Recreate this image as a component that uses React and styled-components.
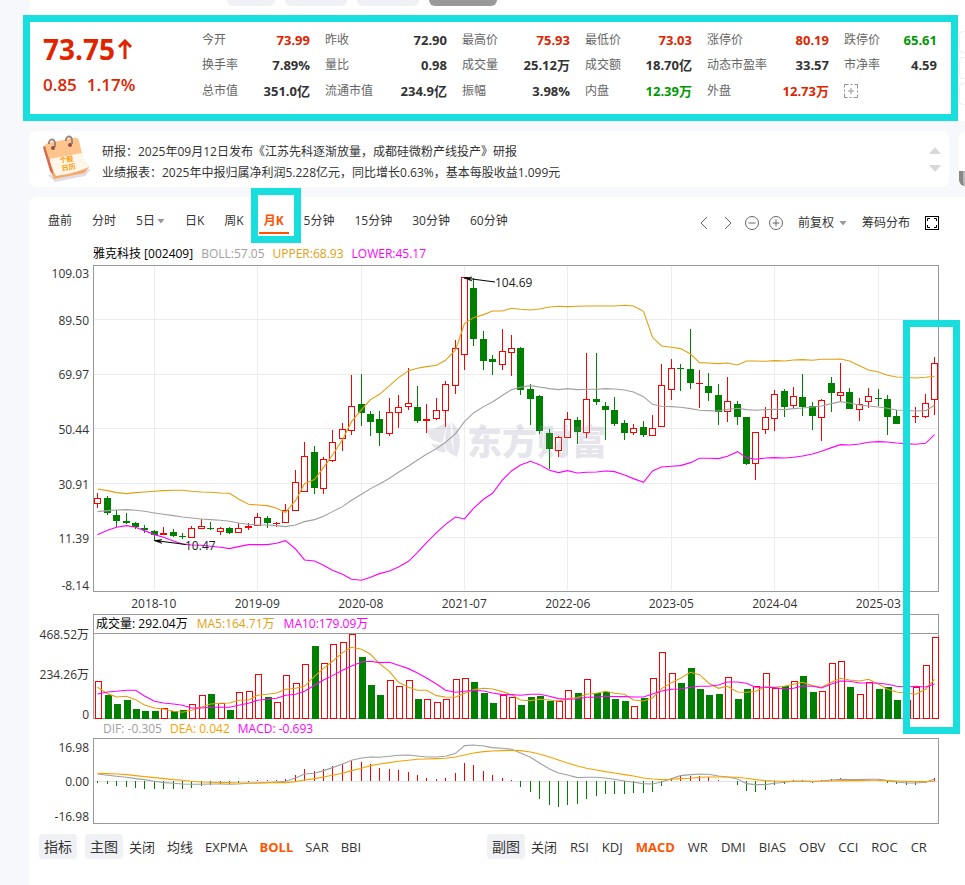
import React, { useState } from 'react'
import styled, { createGlobalStyle } from 'styled-components'

const GlobalStyle = createGlobalStyle`
    * {
        box-sizing: border-box;
    }

    body {
        margin: 0;
        background-color: #f6f8fb;
        color: #333;
        font: 12px/16px "Open Sans", "Noto Sans CJK SC", sans-serif;
    }

    button, select {
        padding: 0;
        border: 0;
        background: none;
        color: inherit;
        font: inherit;
        white-space: nowrap;
        cursor: pointer;
    }
`;

const RED = '#ff0000';
const GREEN = '#008000';
const GOLD = '#e0a010';
const ORANGE = '#f5a300';
const PINK = '#ff00ff';
const GREY = '#a0a0a0';
const MARK = '#18dede';

const Page = styled.div`
    min-height: 100vh;
    padding-left: 29px;

    display: flex;
    flex-direction: column;
`;

/* ---------- quote ---------- */

const Top = styled.header`
    background-color: #fff;
`;

const Pills = styled.div`
    height: 15px;
    padding-left: 198px;

    display: flex;
    gap: 10px;
`;

const Pill = styled.span`
    width: ${p => p.$width}px;
    height: 6px;

    border-radius: 0 0 6px 6px;
    background-color: ${p => p.$on ? '#999' : '#f0f1f4'};
`;

const TopRow = styled.div`
    display: flex;
    gap: 1px;
`;

const QuoteBox = styled.section`
    flex: 1;
    margin-left: -6px;
    padding: 5px 14px 9px 13px;

    display: flex;

    border: 7px solid ${MARK};
    background-color: #fff;
`;

const SideSlots = styled.div`
    width: 6px;
    padding-top: 16px;

    display: flex;
    flex-direction: column;
    gap: 4px;
`;

const Slot = styled.span`
    height: 22px;

    border: 1px solid #eceef2;
    border-right: 0;
    border-radius: 4px 0 0 4px;
`;

const PriceBlock = styled.div`
    width: 159px;
    flex: none;

    color: #e02400;
    font-weight: 600;
`;

const Price = styled.div`
    padding-top: 4px;

    display: flex;
    align-items: center;
    gap: 3px;

    font-size: 28px;
    line-height: 36px;
    font-weight: 700;
`;

const Change = styled.div`
    display: flex;
    gap: 10px;

    font-size: 17px;
    line-height: 36px;
`;

const Stats = styled.dl`
    flex: 1;
    margin: 0;

    display: grid;
    grid-template-columns: 108fr 122fr 108fr 107fr 122fr 93fr;
    grid-template-rows: 25px 25px 28px;
    column-gap: 15px;
`;

const Stat = styled.div`
    display: flex;
    align-items: center;
    justify-content: space-between;

    white-space: nowrap;

    dt {
        color: #666;
    }

    dd {
        margin: 0;

        color: ${p => p.$color || '#333'};
        font-size: 13px;
        font-weight: 700;
    }
`;

/* ---------- news ---------- */

const NewsRow = styled.div`
    margin: 10px 0;

    display: flex;
    gap: 10px;
`;

const News = styled.section`
    flex: 1;
    height: 56px;
    padding: 0 8px 0 13px;

    display: flex;
    align-items: center;

    border-radius: 8px;
    background-color: #fff;
`;

const NewsList = styled.ul`
    flex: 1;
    margin: 5px 0 0 10px;
    padding: 0;

    list-style: none;
    line-height: 21px;

    a {
        color: #333;
        text-decoration: none;
    }
`;

const Pager = styled.div`
    padding-top: 1px;

    display: flex;
    flex-direction: column;
    gap: 11px;
`;

const Triangle = styled.button`
    width: 12px;
    height: 7px;

    background-color: #d8d8d8;
    clip-path: polygon(${p => p.$up ? '50% 0, 100% 100%, 0 100%' : '0 0, 100% 0, 50% 100%'});
`;

const SideCard = styled.aside`
    width: 6px;
    padding-top: 40px;

    border-radius: 8px 0 0 8px;
    background-color: #fff;
`;

const SideBadge = styled.div`
    height: 15px;

    border-radius: 0 0 0 8px;
    border-left: 4px solid #888;
    background-color: #bbb;
`;

/* ---------- chart card ---------- */

const Card = styled.main`
    flex: 1;
    padding: 16px 26px 0 0;

    border-radius: 8px 0 0 0;
    background-color: #fff;
`;

const Toolbar = styled.div`
    padding-left: 19px;

    display: flex;
    align-items: flex-start;
    justify-content: space-between;
`;

const Tabs = styled.nav`
    display: flex;
    gap: 20px;
`;

const Tab = styled.button`
    position: relative;

    display: flex;
    align-items: center;
    gap: 2px;

    color: ${p => p.$on ? '#ff5500' : '#333'};
    font-weight: ${p => p.$on ? 700 : 400};

    &::after {
        content: "";
        display: ${p => p.$on ? 'block' : 'none'};
        position: absolute;
        left: -5px;
        right: -5px;
        bottom: -5px;
        height: 2px;
        background-color: #ff5500;
    }
`;

const TabMark = styled.span`
    position: absolute;
    inset: -25px -17px -14px -13px;
    z-index: 2;

    border: 7px solid ${MARK};
    pointer-events: none;
`;

const Caret = styled.span`
    width: 8px;
    height: 5px;

    background-color: #999;
    clip-path: polygon(0 0, 100% 0, 50% 100%);
`;

const Tools = styled.div`
    padding-top: 2px;

    display: flex;
    align-items: center;
    gap: 15px;
`;

const IconButton = styled.button`
    display: flex;

    svg {
        fill: none;
        stroke: ${p => p.$dark ? '#000' : '#666'};
    }
`;

const Adjust = styled.label`
    display: flex;
    align-items: center;
    gap: 4px;

    select {
        width: 37px;
        appearance: none;
    }
`;

const Steppers = styled.div`
    display: flex;
    gap: 10px;
`;

const Charts = styled.div`
    position: relative;
    padding-top: 11px;
`;

const Legend = styled.div`
    margin-left: 64px;
    padding-left: ${p => p.$indent || 0}px;
    height: ${p => p.$height}px;

    display: flex;
    align-items: center;
    gap: 8px;

    color: #000;
    white-space: nowrap;
`;

const LegendItem = styled.span`
    color: ${p => p.$color};
`;

const ChartRow = styled.div`
    display: grid;
    grid-template-columns: 64px 1fr;
`;

const Axis = styled.div`
    margin-bottom: -${p => p.$drop || 0}px;
    padding: ${p => p.$top}px 4px 0 0;

    display: grid;
    grid-template-rows: ${p => p.$rows};
    align-items: center;

    text-align: right;

    span:first-child {
        align-self: start;
    }

    span:last-child {
        align-self: end;
    }
`;

const Panel = styled.div`
    align-self: start;

    border: 1px solid #999;

    svg {
        display: block;
        width: 100%;
        overflow: visible;
    }
`;

const VolumeTitle = styled.div`
    height: 19px;
    padding-left: 2px;

    display: flex;
    align-items: center;
    gap: 9px;

    border-bottom: 1px solid #999;
    color: #000;
    white-space: nowrap;
`;

const Dates = styled.div`
    height: 22px;
    margin-left: 64px;
    padding: 2px 9px 0;

    display: grid;
    grid-template-columns: repeat(8, 1fr);
    align-items: center;

    text-align: center;
`;

const LatestMark = styled.div`
    position: absolute;
    top: 89px;
    right: -21px;
    z-index: 2;

    width: 57px;
    height: 414px;

    border: 7px solid ${MARK};
    pointer-events: none;
`;

/* ---------- indicators ---------- */

const Indicators = styled.footer`
    padding: 10px 4px 24px 10px;

    display: grid;
    grid-template-columns: 1fr 1fr;
`;

const Group = styled.div`
    display: flex;
    align-items: center;
    gap: 6px;
`;

const Badges = styled.div`
    display: flex;
    gap: 8px;
`;

const Badge = styled.span`
    padding: 0 5px;

    border-radius: 4px;
    background-color: #f0f1f4;
    font-size: 14px;
    line-height: 25px;
    white-space: nowrap;
`;

const Names = styled.div`
    display: flex;
    gap: ${p => p.$gap}px;
`;

const Indicator = styled.button`
    color: ${p => p.$on ? '#ff5500' : '#333'};
    font-size: 13px;
    font-weight: ${p => p.$on ? 700 : 400};
`;

/* ---------- data ---------- */

const stats = [
    ['今开', '73.99', '#e02400'],
    ['昨收', '72.90'],
    ['最高价', '75.93', '#e02400'],
    ['最低价', '73.03', '#e02400'],
    ['涨停价', '80.19', '#e02400'],
    ['跌停价', '65.61', '#009900'],
    ['换手率', '7.89%'],
    ['量比', '0.98'],
    ['成交量', '25.12万'],
    ['成交额', '18.70亿'],
    ['动态市盈率', '33.57'],
    ['市净率', '4.59'],
    ['总市值', '351.0亿'],
    ['流通市值', '234.9亿'],
    ['振幅', '3.98%'],
    ['内盘', '12.39万', '#009900'],
    ['外盘', '12.73万', '#e02400'],
];

const periods = ['盘前', '分时', '5日', '日K', '周K', '月K', '5分钟', '15分钟', '30分钟', '60分钟'];
const mainIndicators = ['关闭', '均线', 'EXPMA', 'BOLL', 'SAR', 'BBI'];
const subIndicators = ['关闭', 'RSI', 'KDJ', 'MACD', 'WR', 'DMI', 'BIAS', 'OBV', 'CCI', 'ROC', 'CR'];
const dates = ['2018-10', '2019-09', '2020-08', '2021-07', '2022-06', '2023-05', '2024-04', '2025-03'];

// one candle per month: high, body top, body bottom, low (thirds of a pixel, downwards)
const candles = [
    [692,708,725,738],[703,708,752,758],[743,759,777,795],[753,777,783,785],[779,783,795,800],
    [790,798,804,812],[804,807,819,833],[794,813,819,819],[801,810,822,825],[813,822,825,831],
    [792,798,828,828],[771,792,801,801],[779,798,801,804],[795,798,810,818],[796,798,813,816],
    [783,798,813,813],[783,792,798,804],[752,765,792,792],[761,768,783,797],[779,783,786,794],
    [727,744,783,783],[624,660,747,747],[540,582,690,690],[552,570,678,696],[585,591,681,697],
    [504,540,597,600],[483,501,531,566],[339,432,507,518],[337,426,453,492],[448,456,480,522],
    [447,471,513,551],[408,450,516,522],[399,435,453,498],[318,423,435,444],[372,435,477,482],
    [426,471,476,514],[409,444,471,474],[357,366,447,496],[234,258,372,395],[45,45,279,324],
    [48,78,231,251],[207,231,297,323],[280,291,300,339],[201,267,309,323],[220,258,273,342],
    [255,258,384,399],[365,381,411,489],[400,402,507,515],[501,513,561,622],[522,525,567,585],
    [450,471,528,528],[465,474,510,546],[273,411,513,528],[273,411,420,428],[420,432,444,533],
    [405,444,486,493],[473,483,513,533],[486,498,513,518],[477,495,519,524],[459,498,522,523],
    [305,369,495,495],[291,318,384,413],[306,318,321,388],[202,321,363,381],[324,363,366,438],
    [333,372,393,418],[367,399,450,490],[345,417,450,480],[418,426,465,489],[465,465,606,609],
    [510,510,606,654],[435,465,504,516],[384,396,471,508],[382,387,435,465],[375,402,432,438],
    [336,405,435,462],[420,432,462,504],[411,414,468,537],[345,363,393,450],[303,390,402,418],
    [378,390,441,441],[408,426,444,476],[378,402,420,438],[381,408,411,432],[399,411,465,519],
    [443,462,486,486],[440,462,471,480],[435,462,465,483],[396,423,465,467],[285,303,414,459],
];
const candleColors = 'RGGGGGGRGGRRGRGRRRGRRRRGRRRRGGGRRRGRRRRRGGGRRGGGGRRGRGGGGRGRRRGGRGGRGGRRRGRGGRGRGRRGGGRRRR';

const upper = [680,685,691,694,691,689,687,685,684,684,687,689,690,692,693,710,726,728,730,738,750,715,664,652,616,578,532,478,442,412,396,370,346,325,318,313,309,294,263,184,166,157,146,146,138,141,143,140,134,132,133,132,131,131,131,131,129,131,147,225,251,255,259,275,301,302,304,302,308,296,296,297,295,296,293,292,294,291,291,290,296,310,323,329,339,344,345,347,345,342];
const boll = [748,745,743,742,744,747,752,756,760,764,767,770,772,774,777,782,786,788,788,790,793,788,778,772,762,748,733,714,696,679,665,648,630,611,593,576,559,540,514,478,452,433,419,399,382,375,370,374,379,382,379,382,381,381,379,380,383,389,403,426,432,433,435,439,444,445,446,441,438,442,444,442,441,442,439,437,434,431,424,418,422,428,431,434,438,443,444,446,445,429];
const lower = [817,804,795,790,795,805,817,825,836,845,848,849,852,855,859,853,847,847,847,843,835,860,893,896,909,924,936,951,954,945,934,926,914,897,870,841,811,786,764,770,738,711,693,653,626,608,597,607,624,631,625,632,630,629,626,628,638,649,660,626,614,612,610,601,588,588,589,582,568,586,591,587,586,587,585,581,575,567,556,547,548,545,540,538,539,542,544,546,543,517];

const volumes = [274,315,342,330,357,363,363,354,363,360,342,315,312,340,360,306,303,252,321,336,255,279,222,168,219,162,156,132,201,285,315,270,288,270,327,327,336,327,267,264,276,309,339,315,321,345,321,318,333,333,300,309,267,309,306,327,333,348,324,264,186,249,279,234,297,315,312,261,327,297,288,249,294,288,273,258,306,303,219,213,291,312,276,297,291,330,330,291,225,141];
const volumeColors = 'RGGGGGGRGGRRGRGRRRGRRRRGRRRRGGGRRRGRRRRRGGGRRGGGGRRGRGGGGRGRRRGGGGGRGGRRRGRGGRRRGRRGGGRRRR';
const ma5 = [291,310,320,318,328,344,353,356,363,366,360,350,341,339,338,330,329,315,312,308,297,294,288,258,234,213,187,171,177,192,220,244,276,291,300,300,316,320,321,309,298,294,296,304,313,329,331,327,329,332,325,322,312,309,303,309,312,329,332,323,295,277,264,246,253,278,294,288,305,306,303,290,291,288,282,276,286,291,276,264,269,272,267,281,297,305,308,312,297,267];
const ma10 = [311,305,303,300,300,317,333,338,341,345,353,353,351,351,351,345,339,330,327,324,315,312,303,285,269,256,240,227,215,213,217,216,225,235,248,263,281,300,306,303,300,302,308,313,313,315,312,312,318,325,327,326,321,321,318,319,319,320,320,311,302,297,296,291,288,288,284,275,275,279,291,291,292,296,294,287,288,293,281,272,273,278,278,279,282,288,290,288,290,281];

const macd = [578,581,587,591,594,597,598,598,598,597,593,588,585,582,583,579,577,571,570,570,567,555,538,542,536,528,522,513,515,523,534,538,541,545,556,564,568,564,549,519,526,542,556,564,570,591,606,627,645,651,645,642,628,617,612,612,613,610,610,606,587,567,558,557,558,562,571,572,585,603,606,599,585,581,571,571,578,571,568,565,570,570,569,570,578,583,585,585,580,563];
const dif = [551,555,558,561,565,568,573,577,579,581,582,582,581,581,582,581,579,578,577,575,573,563,551,549,541,532,521,510,503,500,501,498,495,494,497,500,500,498,489,466,464,467,472,474,477,488,501,518,536,548,554,562,561,561,563,567,572,576,580,581,575,565,556,553,551,552,557,560,566,580,583,583,579,576,573,572,574,572,569,567,568,568,567,567,571,575,578,578,576,566];
const dea = [549,550,551,553,556,559,562,565,568,570,573,575,576,577,577,578,578,578,577,577,577,574,569,565,560,555,549,541,534,526,521,517,513,510,507,506,505,504,500,494,488,484,482,481,480,481,485,491,500,509,518,527,534,539,544,548,553,557,563,566,568,567,565,564,561,560,560,560,561,564,568,571,572,573,573,573,573,573,572,571,571,571,570,570,571,572,573,574,574,573];

const left = i => Math.round(0.4 + 9.4 * i);
const scaleFrom = top => v => Math.round((v - top) / 3);

/* ---------- drawings ---------- */

const Line = ({values, top, color}) => (
    <polyline
        points={values.map((v, i) => `${left(i) + 3.5},${(v - top) / 3 + 0.3}`).join(' ')}
        fill="none"
        stroke={color}
        strokeWidth="1.1"
    />
);

const Body = ({x, y, height, red}) => red && height > 2
    ? <rect x={x + 0.5} y={y + 0.5} width="6" height={height - 1} fill="#fff" stroke={RED}/>
    : <rect x={x} y={y} width="7" height={height} fill={red ? RED : GREEN}/>;

const PriceChart = () => {
    const y = scaleFrom(12);

    return (
        <svg viewBox="0 0 844 325" role="img" aria-label="雅克科技月K线">
            <g fill="#ececec">
                {[54, 109, 163, 218, 272].map(v => <rect key={v} y={v - 1} width="844" height="1"/>)}
                {[6, 17, 28, 39, 50, 61, 72, 83].map(i => <rect key={i} x={left(i) + 3} width="1" height="324"/>)}
            </g>
            {candles.map(([high, open, close, low], i) => {
                const red = candleColors[i] === 'R';
                return (
                    <g key={i}>
                        <rect x={left(i) + 3} y={y(high)} width="1" height={y(low) - y(high)} fill={red ? RED : GREEN}/>
                        <Body x={left(i)} y={y(open)} height={y(close) - y(open)} red={red}/>
                    </g>
                );
            })}
            <Line values={boll} top={12} color={GREY}/>
            <Line values={upper} top={12} color={GOLD}/>
            <Line values={lower} top={12} color={PINK}/>
            <g stroke="#000" fill="#000">
                <path d="M370.500 12 L401 16"/>
                <path d="M370 12 l8 -1 l-3 1.500 l3 2.500 z" strokeWidth="0.500"/>
                <path d="M60.500 274.500 L92 278.500"/>
                <path d="M60 274.500 l8 -1 l-3 1.500 l3 2.500 z" strokeWidth="0.500"/>
            </g>
            <g fontSize="12" fill="#222">
                <text x="401" y="21">104.69</text>
                <text x="91" y="284">10.47</text>
            </g>
            <g fill="#8c8ca8" opacity="0.22">
                <path d="M332 162 C339 167 345 158 354 157 C352 163 350 168 349 176 C342 178 334 172 332 162 Z"/>
                <path d="M337 177 C343 180 347 178 350 177 L352 186 C346 187 340 184 337 177 Z"/>
                <path d="M351 176 C351 167 353 160 356 156 C358 168 356 178 362 190 C355 188 351 184 351 176 Z"/>
                <path d="M358 156 C366 163 369 178 362 192 C358 180 359 168 358 156 Z"/>
                <text x="373" y="189" fontSize="35" fontWeight="900" fontFamily="'Noto Sans CJK SC', sans-serif">东方财富</text>
            </g>
        </svg>
    );
};

const VolumeChart = () => {
    const y = scaleFrom(132);

    return (
        <svg viewBox="0 0 844 84" role="img" aria-label="成交量">
            {volumes.map((v, i) => (
                <Body key={i} x={left(i) + 1} y={y(v)} height={85 - y(v)} red={volumeColors[i] === 'R'}/>
            ))}
            <Line values={ma5} top={132} color={GOLD}/>
            <Line values={ma10} top={132} color={PINK}/>
        </svg>
    );
};

const MacdChart = () => {
    const y = scaleFrom(447);

    return (
        <svg viewBox="0 0 844 84" role="img" aria-label="MACD">
            <rect y="42" width="844" height="1" fill="#e4e4e4"/>
            {macd.map((v, i) => (
                <rect
                    key={i}
                    x={left(i) + 3}
                    y={v < 574 ? y(v) : 42}
                    width="1"
                    height={Math.abs(y(v) - 42)}
                    fill={v < 574 ? RED : GREEN}
                />
            ))}
            <Line values={dif} top={447} color={GREY}/>
            <Line values={dea} top={447} color={ORANGE}/>
        </svg>
    );
};

const CalendarIcon = () => (
    <svg width="50" height="48" viewBox="0 0 50 48" aria-hidden="true">
        <path d="M6 40 L38 35 L49 34 L43 41 L13 47 Z" fill="#dcd3dc" opacity="0.8"/>
        <path d="M2 16 L12 44 L42 38 L47 32 L38 20 Z" fill="#f6a868"/>
        <path d="M1 12 L4 10 L10 24 L11 40 L8 36 Z" fill="#d9694a"/>
        <path d="M7 22 L39 15 Q42 26 48 31 Q39 37 14 41 Q9 33 7 22 Z" fill="#fff6ea"/>
        <path d="M3 11 Q3 9 6 8 L32 3 Q36 2 37 6 L40 18 L7 24 Z" fill="#ffc48c"/>
        <path d="M7 9 a3 4 0 0 1 6 -1 l0 4 M24 6 a3 4 0 0 1 6 -1 l0 4" fill="none" stroke="#a58378" strokeWidth="2"/>
        <circle cx="11" cy="13" r="2" fill="#8f5145"/>
        <circle cx="28" cy="10" r="2" fill="#8f5145"/>
        <g fontSize="7" fontWeight="700" fill="#ff9800" transform="rotate(-8 25 28)">
            <text x="18" y="27">个股</text>
            <text x="19" y="35">日历</text>
        </g>
    </svg>
);

const UpArrow = () => (
    <svg width="14" height="20" viewBox="0 0 14 20" aria-label="上涨">
        <path d="M7 20 V2 M1 8 L7 2 L13 8" fill="none" stroke="#e02400" strokeWidth="3"/>
    </svg>
);

const AddIcon = () => (
    <svg width="14" height="14" viewBox="0 0 14 14" opacity="0.7">
        <rect x="0.5" y="0.5" width="13" height="13" strokeDasharray="4 2 2 2 3 0"/>
        <path d="M7 4 V10 M4 7 H10"/>
    </svg>
);

const Zoomer = ({plus}) => (
    <svg width="14" height="14" viewBox="0 0 14 14">
        <circle cx="7" cy="7" r="6.500"/>
        <path d={plus ? 'M3.500 7 H10.500 M7 3.500 V10.500' : 'M3.500 7 H10.500'}/>
    </svg>
);

const IndicatorGroup = ({badges, names, gap, active, onPick}) => (
    <Group>
        <Badges>{badges.map(b => <Badge key={b}>{b}</Badge>)}</Badges>
        <Names $gap={gap}>
            {names.map(n => (
                <Indicator key={n} $on={n === active} onClick={() => onPick(n)}>{n}</Indicator>
            ))}
        </Names>
    </Group>
);

const App = () => {
    const [period, setPeriod] = useState('月K');
    const [mainChart, setMainChart] = useState('BOLL');
    const [subChart, setSubChart] = useState('MACD');

    return (
        <Page>
            <GlobalStyle/>
            <Top>
                <Pills>
                    <Pill $width={48}/>
                    <Pill $width={62}/>
                    <Pill $width={62}/>
                    <Pill $width={68} $on/>
                </Pills>
                <TopRow>
                    <QuoteBox>
                        <PriceBlock>
                            <Price>73.75<UpArrow/></Price>
                            <Change><span>0.85</span><span>1.17%</span></Change>
                        </PriceBlock>
                        <Stats>
                            {stats.map(([label, value, color]) => (
                                <Stat key={label} $color={color}><dt>{label}</dt><dd>{value}</dd></Stat>
                            ))}
                            <Stat>
                                <dt><IconButton aria-label="添加指标"><AddIcon/></IconButton></dt>
                            </Stat>
                        </Stats>
                    </QuoteBox>
                    <SideSlots><Slot/><Slot/><Slot/></SideSlots>
                </TopRow>
            </Top>
            <NewsRow>
                <News>
                    <CalendarIcon/>
                    <NewsList>
                        <li><a href="#report">研报：2025年09月12日发布《江苏先科逐渐放量，成都硅微粉产线投产》研报</a></li>
                        <li><a href="#results">业绩报表：2025年中报归属净利润5.228亿元，同比增长0.63%，基本每股收益1.099元</a></li>
                    </NewsList>
                    <Pager>
                        <Triangle $up aria-label="上一条"/>
                        <Triangle aria-label="下一条"/>
                    </Pager>
                </News>
                <SideCard><SideBadge/></SideCard>
            </NewsRow>
            <Card>
                <Toolbar>
                    <Tabs>
                        {periods.map(p => (
                            <Tab key={p} $on={p === period} onClick={() => setPeriod(p)}>
                                {p}
                                {p === '5日' && <Caret/>}
                                {p === '月K' && <TabMark/>}
                            </Tab>
                        ))}
                    </Tabs>
                    <Tools>
                        <Steppers>
                            <IconButton aria-label="向左">
                                <svg width="14" height="14" viewBox="0 0 14 14"><path d="M10 1 L4 7 L10 13"/></svg>
                            </IconButton>
                            <IconButton aria-label="向右">
                                <svg width="14" height="14" viewBox="0 0 14 14"><path d="M4 1 L10 7 L4 13"/></svg>
                            </IconButton>
                            <IconButton aria-label="缩小"><Zoomer/></IconButton>
                            <IconButton aria-label="放大"><Zoomer plus/></IconButton>
                        </Steppers>
                        <Adjust>
                            <select aria-label="复权方式" defaultValue="前复权">
                                <option>前复权</option>
                                <option>后复权</option>
                                <option>不复权</option>
                            </select>
                            <Caret/>
                        </Adjust>
                        <button>筹码分布</button>
                        <IconButton $dark aria-label="全屏">
                            <svg width="14" height="14" viewBox="0 0 14 14">
                                <rect x="0.5" y="0.5" width="13" height="13"/>
                                <path d="M2.500 5 V2.500 H5 M9 2.500 H11.500 V5 M11.500 9 V11.500 H9 M5 11.500 H2.500 V9"/>
                            </svg>
                        </IconButton>
                    </Tools>
                </Toolbar>
                <Charts>
                    <Legend $height={23}>
                        <span>雅克科技 [002409]</span>
                        <LegendItem $color={GREY}>BOLL:57.05</LegendItem>
                        <LegendItem $color={GOLD}>UPPER:68.93</LegendItem>
                        <LegendItem $color={PINK}>LOWER:45.17</LegendItem>
                    </Legend>
                    <ChartRow>
                        <Axis $top={1} $drop={2} $rows="1fr 2fr 2fr 2fr 2fr 2fr 1fr">
                            <span>109.03</span>
                            <span>89.50</span>
                            <span>69.97</span>
                            <span>50.44</span>
                            <span>30.91</span>
                            <span>11.39</span>
                            <span>-8.14</span>
                        </Axis>
                        <Panel><PriceChart/></Panel>
                    </ChartRow>
                    <Dates>{dates.map(d => <span key={d}>{d}</span>)}</Dates>
                    <ChartRow>
                        <Axis $top={13} $drop={4} $rows="1fr 1fr 1fr">
                            <span>468.52万</span>
                            <span>234.26万</span>
                            <span>0</span>
                        </Axis>
                        <Panel>
                            <VolumeTitle>
                                <span>成交量: 292.04万</span>
                                <LegendItem $color={GOLD}>MA5:164.71万</LegendItem>
                                <LegendItem $color={PINK}>MA10:179.09万</LegendItem>
                            </VolumeTitle>
                            <VolumeChart/>
                        </Panel>
                    </ChartRow>
                    <Legend $height={19} $indent={10}>
                        <LegendItem $color={GREY}>DIF: -0.305</LegendItem>
                        <LegendItem $color={ORANGE}>DEA: 0.042</LegendItem>
                        <LegendItem $color={PINK}>MACD: -0.693</LegendItem>
                    </Legend>
                    <ChartRow>
                        <Axis $top={2} $drop={1} $rows="1fr 1fr 1fr">
                            <span>16.98</span>
                            <span>0.00</span>
                            <span>-16.98</span>
                        </Axis>
                        <Panel><MacdChart/></Panel>
                    </ChartRow>
                    <LatestMark/>
                </Charts>
                <Indicators>
                    <IndicatorGroup
                        badges={['指标', '主图']}
                        names={mainIndicators}
                        gap={12}
                        active={mainChart}
                        onPick={setMainChart}
                    />
                    <IndicatorGroup
                        badges={['副图']}
                        names={subIndicators}
                        gap={13}
                        active={subChart}
                        onPick={setSubChart}
                    />
                </Indicators>
            </Card>
        </Page>
    );
};

export default App
